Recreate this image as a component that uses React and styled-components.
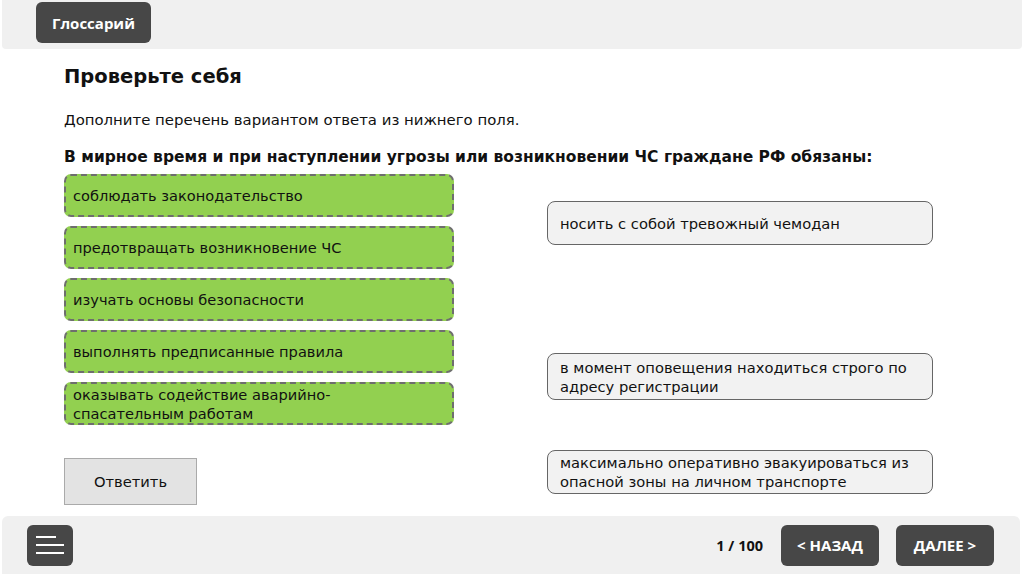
import React from "react";
import styled, { createGlobalStyle } from "styled-components";

const Global = createGlobalStyle`
  html, body { margin: 0; padding: 0; background: #ffffff; }
  body { font-family: "DejaVu Sans", Verdana, sans-serif; color: #111; }
`;

const Page = styled.div`
  width: 1024px;
  height: 574px;
  display: flex;
  flex-direction: column;
  overflow: hidden;
`;

const TopBar = styled.header`
  height: 49px;
  margin: 0 2px;
  background: #f0f0f0;
  border-radius: 0 0 4px 4px;
  display: flex;
  align-items: flex-start;
  padding: 2px 0 0 34px;
  box-sizing: border-box;
`;

const DarkButton = styled.button`
  width: ${(p) => p.$w}px;
  height: ${(p) => p.$h}px;
  background: #474747;
  color: #fff;
  border: none;
  border-radius: 6px;
  font-family: "Open Sans", sans-serif;
  font-weight: 700;
  font-size: 15px;
  display: flex;
  align-items: center;
  justify-content: center;
  padding: 0;
  cursor: pointer;
`;

const Main = styled.main`
  flex: 1;
  padding: 14px 0 0 64px;
  display: flex;
  flex-direction: column;
`;

const Title = styled.h1`
  margin: 0;
  font-size: 19.5px;
  font-weight: 700;
  line-height: 28px;
`;

const Instruction = styled.p`
  margin: 19px 0 0;
  font-size: 14.9px;
  line-height: 20px;
`;

const Question = styled.p`
  margin: 17px 0 0;
  font-size: 15.5px;
  font-weight: 700;
  line-height: 20px;
`;

const Columns = styled.div`
  display: flex;
  margin-top: 7px;
  gap: 93px;
`;

const LeftCol = styled.div`
  width: 390px;
  display: flex;
  flex-direction: column;
  gap: 9px;
`;

const RightCol = styled.div`
  width: 386px;
  display: flex;
  flex-direction: column;
`;

const GreenItem = styled.div`
  height: 43px;
  box-sizing: border-box;
  background: #92d050;
  border: 2px dashed #6e6e6e;
  border-radius: 7px;
  padding: 0 7px;
  display: flex;
  align-items: center;
  font-size: 14.6px;
  line-height: 19px;
  white-space: pre-line;
`;

const GrayItem = styled.div`
  margin-top: ${(p) => p.$mt}px;
  height: ${(p) => p.$h}px;
  box-sizing: border-box;
  background: #f2f2f2;
  border: 1px solid #666;
  border-radius: 8px;
  padding: 0 12px;
  display: flex;
  align-items: center;
  font-size: 14.7px;
  line-height: 19px;
`;

const AnswerButton = styled.button`
  margin-top: 24px;
  width: 133px;
  height: 47px;
  background: #e3e3e3;
  border: 1px solid #aaa;
  font-family: "DejaVu Sans", Verdana, sans-serif;
  font-size: 14.7px;
  color: #111;
  padding: 0;
  cursor: pointer;
`;

const BottomBar = styled.footer`
  height: 58px;
  margin: 0 4px 0 2px;
  background: #f0f0f0;
  border-radius: 6px 6px 0 0;
  display: flex;
  align-items: center;
  padding: 0 26px 0 25px;
  box-sizing: border-box;
  gap: 17px;
`;

const Counter = styled.span`
  margin-left: auto;
  margin-right: 1px;
  font-family: "Open Sans", sans-serif;
  font-weight: 700;
  font-size: 14.5px;
  color: #111;
`;

const MenuIcon = () => (
  <svg width="28" height="20" viewBox="0 0 28 20">
    <rect x="0" y="1" width="20" height="2" fill="#fff" />
    <rect x="0" y="9" width="28" height="2" fill="#fff" />
    <rect x="0" y="17" width="28" height="2" fill="#fff" />
  </svg>
);

const left = [
  "соблюдать законодательство",
  "предотвращать возникновение ЧС",
  "изучать основы безопасности",
  "выполнять предписанные правила",
  "оказывать содействие аварийно-\nспасательным работам",
];

export default function App() {
  return (
    <Page>
      <Global />
      <TopBar>
        <DarkButton $w={115} $h={41}>Глоссарий</DarkButton>
      </TopBar>
      <Main>
        <Title>Проверьте себя</Title>
        <Instruction>Дополните перечень вариантом ответа из нижнего поля.</Instruction>
        <Question>
          В мирное время и при наступлении угрозы или возникновении ЧС граждане РФ обязаны:
        </Question>
        <Columns>
          <LeftCol>
            {left.map((t) => (
              <GreenItem key={t}>{t}</GreenItem>
            ))}
            <AnswerButton>Ответить</AnswerButton>
          </LeftCol>
          <RightCol>
            <GrayItem $mt={27} $h={44}>носить с собой тревожный чемодан</GrayItem>
            <GrayItem $mt={108} $h={47}>
              в момент оповещения находиться строго по адресу регистрации
            </GrayItem>
            <GrayItem $mt={50} $h={44}>
              максимально оперативно эвакуироваться из опасной зоны на личном транспорте
            </GrayItem>
          </RightCol>
        </Columns>
      </Main>
      <BottomBar>
        <DarkButton $w={46} $h={41}>
          <MenuIcon />
        </DarkButton>
        <Counter>1 / 100</Counter>
        <DarkButton $w={98} $h={41}>&lt; НАЗАД</DarkButton>
        <DarkButton $w={98} $h={41}>ДАЛЕЕ &gt;</DarkButton>
      </BottomBar>
    </Page>
  );
}
